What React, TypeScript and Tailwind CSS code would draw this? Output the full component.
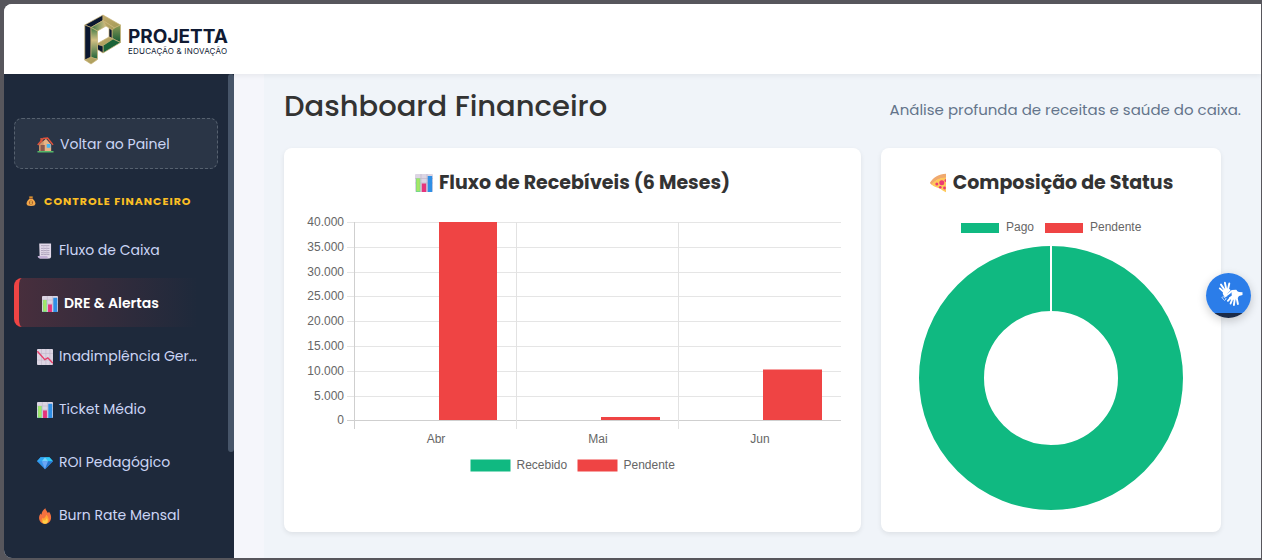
import React from "react";

type IconProps = { className?: string };

const House = ({ className }: IconProps) => (
  <svg viewBox="0 0 18 18" className={className} aria-hidden="true">
    <path d="M3.5 2h2.2v5H3.5z" fill="#c0563a" />
    <path d="M2.5 9 9.5 3l5.5 6v7.5H2.5z" fill="#e8b184" />
    <path d="M2.5 9 7 5v11.5H2.5z" fill="#d09468" />
    <path d="M3.8 9.6h4.4v6.9H3.8z" fill="#8a5a50" />
    <path d="M10.3 8.6h4v3.9h-4z" fill="#45b4f2" />
    <path d="M.8 9.6 6.6 2.6l4.6-.4 5.8 7.2" fill="none" stroke="#e0523c" strokeWidth="1.6" />
    <path d="M.5 16h17v1.400H.5z" fill="#55b86a" />
  </svg>
);

const MoneyBag = ({ className }: IconProps) => (
  <svg viewBox="0 0 12 14" className={className} aria-hidden="true">
    <path d="M3.4 1.2 4.8 1.8 6 1 7.200 1.800 8.600 1.200 7.500 4.400H4.500z" fill="#d89030" />
    <path d="M4.500 4h3C10 6 11.300 7.900 11.300 9.900c0 2-1.600 3-5.300 3S.7 11.900.7 9.900C.7 7.900 2 6 4.500 4z" fill="#f3a84a" />
    <path d="M4 3.700h4v1H4z" fill="#8a4a2a" />
    <circle cx="6" cy="9" r="2.500" fill="#a9602c" />
    <path d="M7 7.800c-2-.8-2.400.9-1 1.100 1.500.3 1 1.900-1 1.100M6 7v4" stroke="#ffd25e" strokeWidth=".7" fill="none" />
  </svg>
);

const Scroll = ({ className }: IconProps) => (
  <svg viewBox="0 0 18 18" className={className} aria-hidden="true">
    <path d="M2.500.5H15.800v15a1.800 1.800 0 0 1-1.800 1.800H3z" fill="#e2d9ea" />
    <path d="M.8 14.500h10.700c.3 1.800 1 2.600 2 2.800H3.500C1.800 17.300.8 16.200.8 14.500z" fill="#c3b0d6" />
    <path d="M4.500 3h9.500M4.500 6h9.500M4.500 8.500h9.500M4.500 11h9.500M4.500 13h9.500" stroke="#a297b1" strokeWidth=".9" />
    <path d="M7.500 3v10.500M11 3v10.500" stroke="#c9bfd3" strokeWidth=".7" />
  </svg>
);

const BarsIcon = ({ className }: IconProps) => (
  <svg viewBox="0 0 18 18" className={className} aria-hidden="true">
    <rect width="18" height="18" rx="1" fill="#dcd5e3" />
    <path d="M0 4.500h18M0 9h18M6 0v18M12 0v18" stroke="#c0b7ca" strokeWidth=".7" />
    <path d="M1 4.500h4.300V18H1z" fill="#74d98a" />
    <path d="M1.600 4.500h3.100V17H1.600z" fill="#a7e565" />
    <path d="M6.800 9.500h4.400V18H6.800z" fill="#e6347c" />
    <path d="M12.700 2H17.200v16h-4.500z" fill="#2f8fe6" />
  </svg>
);

const FallIcon = ({ className }: IconProps) => (
  <svg viewBox="0 0 18 18" className={className} aria-hidden="true">
    <rect width="18" height="18" rx="1" fill="#dcd5e3" />
    <path d="M0 5h18M0 12.500h18M5 0v18M10 0v18M14.500 0v18" stroke="#c0b7ca" strokeWidth=".7" />
    <path d="m.4 2.500 8.400 9.500 3.400-2 5.600 6" fill="none" stroke="#e6406b" strokeWidth="1.600" />
  </svg>
);

const Gem = ({ className }: IconProps) => (
  <svg viewBox="0 0 18 18" className={className} aria-hidden="true">
    <path d="M4 2.500h10l4 4.500L9 16 0 7z" fill="#3494ea" />
    <path d="M4 2.500h5L5.500 7H0z" fill="#30a8f4" />
    <path d="M9 2.500h5L18 7h-5.500z" fill="#2cc9f5" />
    <path d="M9 2.500 5.500 7h7z" fill="#74d2fa" />
    <path d="M5.500 7h7L9 16z" fill="#6ba6f4" />
    <path d="M12.500 7H18L9 16z" fill="#2876cd" />
  </svg>
);

const Fire = ({ className }: IconProps) => (
  <svg viewBox="0 0 18 18" className={className} aria-hidden="true">
    <path d="M9.500.3c.3 2.400 2 3.600 2.800 5.400l1.200-1.400c2 2.800 2.800 5.300 2.200 8-.7 3.300-3.200 5.400-6.700 5.400s-6-2.100-6.600-5.400C2 9.600 3 8 4 6.300l1 1.400C5.200 4.300 7 2.300 9.500.3z" fill="#f4713f" />
    <path d="M10.500 7.500c3 2.600 4.400 9.700-1 10.100-5 .2-5.200-4.400-3-6.600l1.200 1c1-1.400 2.200-2.700 2.800-4.500z" fill="#ffa533" />
    <path d="M10.800 11.500c2.400 2.400 1.400 6.100-1.800 6.100s-2.800-2.800-1.500-4.100l1.600.9z" fill="#ffcf46" />
  </svg>
);

const Pizza = ({ className }: IconProps) => (
  <svg viewBox="0 0 18 20" className={className} aria-hidden="true">
    <path d="M.8 10C4.500 4 10 1 17 .7V5C11 5 6 7.600 3 12z" fill="#f0a96e" />
    <path d="M2.500 11.300C6 7 11 4.700 17 4.500V19.300c-3-1-4.500-3.200-7-4-2.500-1-6-1.800-7.500-4z" fill="#ffc95c" />
    <g fill="#ec3b74">
      <circle cx="12.800" cy="9.700" r="2.500" />
      <circle cx="7.800" cy="11" r="1.500" />
      <circle cx="11.300" cy="14.300" r="1.300" />
      <circle cx="15.500" cy="15" r="1.400" />
      <path d="M17 6v3a1.500 1.500 0 0 1 0-3z" />
    </g>
  </svg>
);

const LogoMark = ({ className }: IconProps) => (
  <svg viewBox="0 0 38 52" className={className} aria-hidden="true">
    <defs>
      <linearGradient id="gold" x1="0" y1="0" x2="1" y2="1">
        <stop offset="0" stopColor="#c2ab6b" />
        <stop offset="1" stopColor="#a39a58" />
      </linearGradient>
      <linearGradient id="leaf" x1="0" y1="0" x2="0" y2="1">
        <stop offset="0" stopColor="#8d9a55" />
        <stop offset="1" stopColor="#145a35" />
      </linearGradient>
      <linearGradient id="stem" x1="0" y1="0" x2="0" y2="1">
        <stop offset="0" stopColor="#3e7a45" />
        <stop offset=".4" stopColor="#d3c084" />
        <stop offset="1" stopColor="#1d6338" />
      </linearGradient>
      <linearGradient id="inner" x1="0" y1="0" x2="1" y2="0">
        <stop offset="0" stopColor="#3a7543" />
        <stop offset="1" stopColor="#d3c084" />
      </linearGradient>
    </defs>
    <g stroke="#c9b377" strokeWidth=".7" strokeLinejoin="round">
      <path d="M.8 12 19 2v5.500L7 14.500z" fill="#0b1730" />
      <path d="m19 2 17.500 10-6 3L19 7.500z" fill="url(#gold)" />
      <path d="M36.500 12v17.500l-8.500-4V16z" fill="url(#leaf)" />
      <path d="m7 14.500 12-7 3 5.500-8.500 5z" fill="url(#inner)" />
      <path d="m19 7.500 11.500 7.500-2.500 2-6-4z" fill="url(#gold)" />
      <path d="m25 15 3 2v8.500l-3-1.500z" fill="#0b1730" />
      <path d="m13.500 30.500 11.500-6.500 5.500 2.500L19 33l-5.500 1z" fill="url(#gold)" />
      <path d="m29 26 7.500 3.500L19 40v-7.500z" fill="#1b6338" />
      <path d="M13.500 31.500 19 33v7l-5.500-3.500z" fill="#0b1730" />
      <path d="M.8 12 7 14.500v31L.8 47z" fill="#0b1730" />
      <path d="m7 14.500 6.500 3.500v28l-6.500-1z" fill="url(#stem)" />
      <path d="M.8 47 7 44l6.500 2.500L7 51z" fill="url(#gold)" />
    </g>
  </svg>
);

const Hands = ({ className }: IconProps) => (
  <svg viewBox="0 0 26 26" className={className} aria-hidden="true">
    <g fill="none" stroke="#fff" strokeLinecap="round" strokeLinejoin="round">
      <path d="M6 11 1.800 7.400M7 9.500 3 3.600M8.300 8.500 6.900 1.800M10 8.500l1.300-6" strokeWidth="1.900" />
      <path d="m12.500 17-2.600 2.800M14.500 17.500l-1.900 5M16.800 17.500l-.9 6.500M18.500 16l1.400 7" strokeWidth="1.900" />
      <path d="M9.500 13.500 14 10l4-.3" strokeWidth="1.900" />
    </g>
    <path d="m5 9.500 4-2 3 .7.500 1.400-3.300 3 .2 2.700-2.700.9L4.800 13z" fill="#fff" />
    <path d="m13.500 11.500 4-2.300 3.500 1.800 3.500.3v2.600l-3.500 1-2 3-5.500 1.300-2.700-2.400 3-2.300z" fill="#fff" />
    <path d="m3.800 16.500 2.800 3 1.700-1.800-3-2z" fill="none" stroke="#fff" strokeWidth=".8" strokeOpacity=".8" />
  </svg>
);

const items = [
  { label: "Fluxo de Caixa", Icon: Scroll },
  { label: "DRE & Alertas", Icon: BarsIcon, active: true },
  { label: "Inadimplência Ger…", Icon: FallIcon },
  { label: "Ticket Médio", Icon: BarsIcon },
  { label: "ROI Pedagógico", Icon: Gem },
  { label: "Burn Rate Mensal", Icon: Fire },
];

const ticks = ["40.000", "35.000", "30.000", "25.000", "20.000", "15.000", "10.000", "5.000", "0"];

const BarChart = () => (
  <svg
    viewBox="0 0 537 270"
    className="w-full font-['Liberation_Sans',Arial,sans-serif] text-[12px]"
    role="img"
    aria-label="Fluxo de Recebíveis"
  >
    {ticks.map((t, i) => {
      const y = Math.round(10 + i * 24.8);
      return (
        <g key={t}>
          <line x1="43" x2="537" y1={y + 0.5} y2={y + 0.5} stroke={i === 8 ? "#cfcfcf" : "#e5e5e5"} />
          <text x="40" y={y + 4} textAnchor="end" fill="#666">{t}</text>
        </g>
      );
    })}
    {[50, 212, 374].map((x, i) => (
      <line key={x} x1={x + 0.5} x2={x + 0.5} y1="10" y2="217" stroke={i === 0 ? "#cfcfcf" : "#e2e2e2"} />
    ))}
    <g fill="#ef4444">
      <rect x="135" y="10" width="58" height="198" />
      <rect x="297" y="205" width="59" height="3" />
      <rect x="459" y="157.500" width="59" height="50.500" />
    </g>
    <g fill="#666" textAnchor="middle">
      <text x="132" y="231">Abr</text>
      <text x="294" y="231">Mai</text>
      <text x="456" y="231">Jun</text>
    </g>
    <rect x="166.500" y="247.500" width="40" height="12" fill="#10b981" />
    <text x="212.500" y="257" fill="#666">Recebido</text>
    <rect x="273.500" y="247.500" width="40" height="12" fill="#ef4444" />
    <text x="319.500" y="257" fill="#666">Pendente</text>
  </svg>
);

const Doughnut = () => (
  <svg
    viewBox="0 0 300 300"
    className="w-full font-['Liberation_Sans',Arial,sans-serif] text-[12px]"
    role="img"
    aria-label="Composição de Status"
  >
    <rect x="60" y="11" width="38" height="10" fill="#10b981" />
    <text x="105" y="19" fill="#666">Pago</text>
    <rect x="144" y="11" width="38" height="10" fill="#ef4444" />
    <text x="189" y="19" fill="#666">Pendente</text>
    <circle cx="150" cy="166" r="99.500" fill="none" stroke="#10b981" strokeWidth="65" />
    <path d="M150 33v67" stroke="#fff" strokeWidth="2" />
  </svg>
);

export default function App() {
  return (
    <div className="flex h-screen flex-col bg-[#57565c] pt-1 pr-px pb-0.5 pl-1 font-['Poppins','Inter',sans-serif]">
      <div className="relative flex min-h-0 flex-1 flex-col overflow-hidden rounded-l-lg bg-[#f5f6fb]">
        <header className="z-10 flex h-[70px] shrink-0 items-center bg-white pl-20 shadow-[0_2px_5px_rgba(0,0,0,0.06)]">
          <a href="#inicio" className="flex items-center gap-1.5 text-[#0f1a33]">
            <LogoMark className="h-[52px] w-[38px]" />
            <span className="flex flex-col pt-2 font-['Inter',sans-serif]">
              <span className="text-[19px] leading-4 font-bold">PROJETTA</span>
              <span className="text-[8px] leading-3 tracking-wide">EDUCAÇÃO &amp; INOVAÇÃO</span>
            </span>
          </a>
        </header>
        <div className="flex min-h-0 flex-1">
          <aside className="flex w-[230px] shrink-0 bg-[#1e293b]">
            <nav className="min-w-0 flex-1 overflow-hidden px-2.5 pt-11 text-[14px] text-[#cbd5f5]">
              <a
                href="#painel"
                className="flex h-[51px] items-center gap-1.5 rounded-lg border border-dashed border-[#56616f] bg-[#2a3546] pt-0.5 pl-[22px]"
              >
                <House className="size-[17px]" />
                Voltar ao Painel
              </a>
              <h2 className="mt-[18px] mb-2.5 flex h-7 items-center gap-2 pl-3 text-[11px] font-bold tracking-[1px] whitespace-nowrap text-[#fbbf24]">
                <MoneyBag className="h-3 w-2.5 shrink-0" />
                CONTROLE FINANCEIRO
              </h2>
              <ul className="flex flex-col gap-1">
                {items.map(({ label, Icon, active }) => (
                  <li key={label}>
                    <a
                      href="#relatorio"
                      className={
                        active
                          ? "flex h-[49px] items-center gap-1.5 rounded-lg border-l-[5px] border-[#ef4444] bg-linear-to-r from-[#ef4444]/20 to-transparent to-90% pt-0.5 pl-[23px] font-semibold text-white"
                          : "flex h-[49px] items-center gap-1.5 pt-0.5 pl-[23px]"
                      }
                    >
                      <Icon className="size-4 shrink-0" />
                      <span className="whitespace-nowrap">{label}</span>
                    </a>
                  </li>
                ))}
              </ul>
            </nav>
            <div className="w-1.5 shrink-0">
              <div className="h-[78%] rounded-full bg-[#475569]" />
            </div>
          </aside>
          <main className="ml-[30px] min-w-0 flex-1 overflow-hidden bg-[#f0f4f9] px-5 pt-2.5 text-[#333]">
            <div className="flex items-center justify-between">
              <h1 className="text-[29px] leading-[44px] font-medium">Dashboard Financeiro</h1>
              <p className="pt-2 text-[15px] text-[#64748b]">Análise profunda de receitas e saúde do caixa.</p>
            </div>
            <div className="mt-5 flex gap-5 pr-5">
              <section className="min-w-0 flex-1 rounded-lg bg-white p-5 shadow-[0_2px_5px_rgba(0,0,0,0.08)]">
                <h2 className="mb-3.5 flex items-center justify-center gap-1.5 text-[19px] leading-[30px] font-bold">
                  <BarsIcon className="size-[18px]" />
                  Fluxo de Recebíveis (6 Meses)
                </h2>
                <BarChart />
              </section>
              <section className="w-[340px] shrink-0 rounded-lg bg-white p-5 shadow-[0_2px_5px_rgba(0,0,0,0.08)]">
                <h2 className="mb-3.5 flex items-center justify-center gap-1.5 text-[19px] leading-[30px] font-bold">
                  <Pizza className="h-5 w-[18px]" />
                  Composição de Status
                </h2>
                <Doughnut />
              </section>
            </div>
          </main>
        </div>
        <button
          type="button"
          aria-label="Acessibilidade em Libras"
          className="absolute top-[269px] right-2.5 z-20 flex size-[45px] items-center justify-center overflow-hidden rounded-full bg-linear-to-b from-[#2b7de9] from-90% to-[#1b2b48] to-90% pb-1 pl-1 shadow-[0_3px_10px_rgba(0,0,0,0.2)]"
        >
          <Hands className="size-[26px]" />
        </button>
      </div>
    </div>
  );
}
